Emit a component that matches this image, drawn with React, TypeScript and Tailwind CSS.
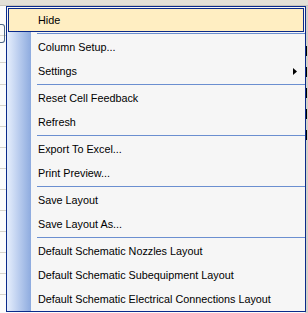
const groups: { label: string; sub?: boolean }[][] = [
  [{ label: "Column Setup..." }, { label: "Settings", sub: true }],
  [{ label: "Reset Cell Feedback" }, { label: "Refresh" }],
  [{ label: "Export To Excel..." }, { label: "Print Preview..." }],
  [{ label: "Save Layout" }, { label: "Save Layout As..." }],
  [
    { label: "Default Schematic Nozzles Layout" },
    { label: "Default Schematic Subequipment Layout" },
    { label: "Default Schematic Electrical Connections Layout" },
  ],
];

const Strip = () => (
  <div className="w-[24px] shrink-0 self-stretch bg-gradient-to-r from-[#e6eefc] to-[#8eabdf]" />
);

const Separator = () => (
  <div className="flex h-[3px]">
    <Strip />
    <div className="flex-1 flex items-center pl-[6px]">
      <div className="h-px w-full bg-[#6b8fd0]" />
    </div>
  </div>
);

const MenuItem = ({ label, sub }: { label: string; sub?: boolean }) => (
  <div className="flex h-[24px]">
    <Strip />
    <div className="flex-1 flex items-center pl-[7px] pr-[8px] justify-between">
      <span>{label}</span>
      {sub && (
        <svg width="4" height="7" viewBox="0 0 4 7">
          <path d="M0 0 L4 3.5 L0 7 Z" fill="#000" />
        </svg>
      )}
    </div>
  </div>
);

export default function App() {
  return (
    <div className="relative w-[308px] h-[313px] overflow-hidden bg-[#fbfbfb]">
      {/* grid behind the menu */}
      <div className="h-[6px] bg-[#e3e0d7] border-b border-[#c9c6bc]" />
      <div className="absolute left-0 top-[6px] w-[6px] h-[307px] flex flex-col">
        {[30, 27, 22, 21, 21, 21, 21, 21, 21, 21, 21, 21, 21, 21].map((h, i) => (
          <div key={i} style={{ height: h }} className="shrink-0 border-b border-[#d6d3cb]" />
        ))}
      </div>
      <div className="absolute left-0 top-[24px] w-[5px] h-[19px] rounded-r-[3px] border border-l-0 border-[#4d6785]" />
      <div className="absolute right-0 top-[6px] w-[3px] h-[307px] bg-[#d4d0c8]">
        {[40, 61, 82, 103, 124].map((y) => (
          <div key={y} className="absolute left-0 w-[2px] h-[10px] bg-black" style={{ top: y }} />
        ))}
      </div>

      <div
        className="absolute left-[6px] top-[6px] w-[300px] border border-[#0a2a8a] bg-[#f6f6f6] text-[10.8px] text-black leading-none"
        style={{ fontFamily: '"Liberation Sans", Arial, sans-serif' }}
      >
        <div className="flex h-[25px]">
          <div className="flex-1 mt-[1px] mx-[1px] h-[24px] border border-[#0a2a8a] bg-[#ffeec2] flex items-center pl-[29px]">
            Hide
          </div>
        </div>
        {groups.map((g, gi) => (
          <div key={gi}>
            <Separator />
            {g.map((it) => (
              <MenuItem key={it.label} {...it} />
            ))}
          </div>
        ))}
      </div>
    </div>
  );
}
